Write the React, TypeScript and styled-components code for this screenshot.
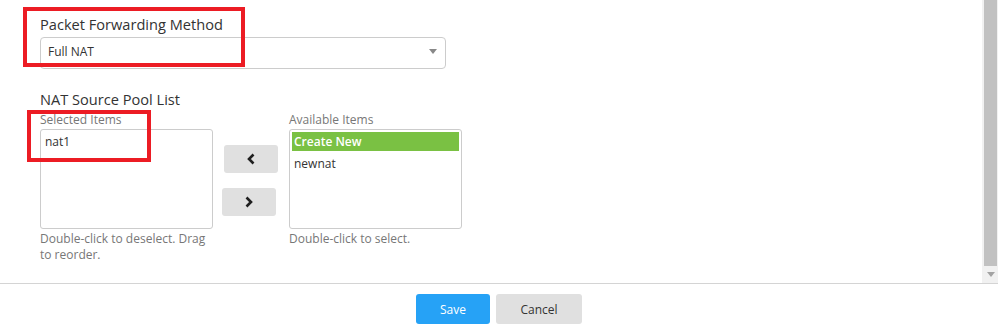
import React from 'react';
import styled, { createGlobalStyle } from 'styled-components';

const GlobalStyle = createGlobalStyle`
  html, body { margin: 0; padding: 0; background: #fff; }
  body { font-family: "Open Sans", "Liberation Sans", sans-serif; color: #333; }
  * { box-sizing: border-box; }
`;

const Page = styled.div`
  position: relative;
  width: 998px;
  height: 330px;
  display: flex;
  flex-direction: column;
`;

const ScrollArea = styled.div`
  display: flex;
  height: 284px;
  border-bottom: 1px solid #d4d4d4;
`;

const Content = styled.div`
  flex: 1;
  padding: 14px 0 0 40px;
`;

const Scrollbar = styled.div`
  width: 16px;
  background: #f1f1f1;
  display: flex;
  flex-direction: column;
`;

const Thumb = styled.div`
  flex: 1;
  margin: 0 1px 0 2px;
  background: #c1c1c1;
`;

const ScrollArrow = styled.div`
  height: 17px;
  display: flex;
  align-items: center;
  justify-content: center;
  padding-left: 1px;
`;

const SectionTitle = styled.div<{ $gap?: number }>`
  font-size: 14.6px;
  line-height: 20px;
  color: #333;
  margin-top: ${(p) => p.$gap ?? 0}px;
`;

const Select = styled.div`
  margin-top: 3px;
  width: 406px;
  height: 32px;
  border: 1px solid #ccc;
  border-radius: 4px;
  display: flex;
  align-items: center;
  justify-content: space-between;
  padding: 0 8px 3px 7px;
  font-size: 12px;
  line-height: 16px;
  color: #333;
`;

const DualList = styled.div`
  display: flex;
  margin-top: 3px;
`;

const ListColumn = styled.div`
  width: 173px;
  display: flex;
  flex-direction: column;
`;

const ListLabel = styled.div`
  font-size: 12px;
  line-height: 16px;
  color: #777;
  margin-bottom: 1px;
`;

const ListBox = styled.div`
  height: 100px;
  border: 1px solid #ccc;
  border-radius: 3px;
  padding: 2px;
  display: flex;
  flex-direction: column;
  gap: 3px;
`;

const Item = styled.div<{ $active?: boolean }>`
  height: 19px;
  line-height: 19px;
  padding: 0 2px;
  font-size: 12px;
  color: ${(p) => (p.$active ? '#fff' : '#333')};
  background: ${(p) => (p.$active ? '#7ac143' : 'transparent')};
  font-weight: ${(p) => (p.$active ? 600 : 400)};
`;

const Hint = styled.div`
  font-size: 12px;
  line-height: 16px;
  color: #777;
  padding-top: 2px;
`;

const Mover = styled.div`
  width: 76px;
  display: flex;
  flex-direction: column;
  padding-top: 33px;
  gap: 15px;
`;

const MoveButton = styled.button<{ $shift: number }>`
  width: 54px;
  height: 28px;
  margin-left: ${(p) => p.$shift}px;
  border: none;
  border-radius: 3px;
  background: #e0e0e0;
  display: flex;
  align-items: center;
  justify-content: center;
  padding: 0;
`;

const Footer = styled.div`
  flex: 1;
  display: flex;
  justify-content: center;
  align-items: flex-start;
  gap: 6px;
  padding-top: 10px;
`;

const FooterButton = styled.button<{ $primary?: boolean }>`
  height: 30px;
  width: ${(p) => (p.$primary ? 74 : 86)}px;
  border: none;
  border-radius: 3px;
  font-family: "Open Sans", "Liberation Sans", sans-serif;
  font-size: 12px;
  background: ${(p) => (p.$primary ? '#26a2f6' : '#e0e0e0')};
  color: ${(p) => (p.$primary ? '#fff' : '#333')};
  padding: 0;
`;

const Highlight = styled.div<{ $l: number; $t: number; $w: number; $h: number }>`
  position: absolute;
  left: ${(p) => p.$l}px;
  top: ${(p) => p.$t}px;
  width: ${(p) => p.$w}px;
  height: ${(p) => p.$h}px;
  border: 4px solid #ec1c24;
  pointer-events: none;
`;

const Chevron = ({ dir }: { dir: 'left' | 'right' }) => (
  <svg width="8" height="12" viewBox="0 0 8 12">
    <path
      d={dir === 'left' ? 'M6.5 1.5 L2 6 L6.5 10.5' : 'M1.5 1.5 L6 6 L1.5 10.5'}
      fill="none"
      stroke="#1f1f1f"
      strokeWidth="2.6"
    />
  </svg>
);

export default function App() {
  return (
    <>
      <GlobalStyle />
      <Page>
        <ScrollArea>
          <Content>
            <SectionTitle>Packet Forwarding Method</SectionTitle>
            <Select>
              <span>Full NAT</span>
              <svg width="8" height="5" viewBox="0 0 8 5">
                <path d="M0 0 H8 L4 5 Z" fill="#888" />
              </svg>
            </Select>

            <SectionTitle $gap={20}>NAT Source Pool List</SectionTitle>
            <DualList>
              <ListColumn>
                <ListLabel>Selected Items</ListLabel>
                <ListBox>
                  <Item>nat1</Item>
                </ListBox>
                <Hint>Double-click to deselect. Drag to reorder.</Hint>
              </ListColumn>
              <Mover>
                <MoveButton $shift={11}>
                  <Chevron dir="left" />
                </MoveButton>
                <MoveButton $shift={9}>
                  <Chevron dir="right" />
                </MoveButton>
              </Mover>
              <ListColumn>
                <ListLabel>Available Items</ListLabel>
                <ListBox>
                  <Item $active>Create New</Item>
                  <Item>newnat</Item>
                </ListBox>
                <Hint>Double-click to select.</Hint>
              </ListColumn>
            </DualList>
          </Content>
          <Scrollbar>
            <Thumb />
            <ScrollArrow>
              <svg width="8" height="5" viewBox="0 0 8 5">
                <path d="M0 0 H8 L4 5 Z" fill="#a3a3a3" />
              </svg>
            </ScrollArrow>
          </Scrollbar>
        </ScrollArea>
        <Footer>
          <FooterButton $primary>Save</FooterButton>
          <FooterButton>Cancel</FooterButton>
        </Footer>
        <Highlight $l={23} $t={7} $w={222} $h={60} />
        <Highlight $l={27} $t={110} $w={124} $h={52} />
      </Page>
    </>
  );
}
